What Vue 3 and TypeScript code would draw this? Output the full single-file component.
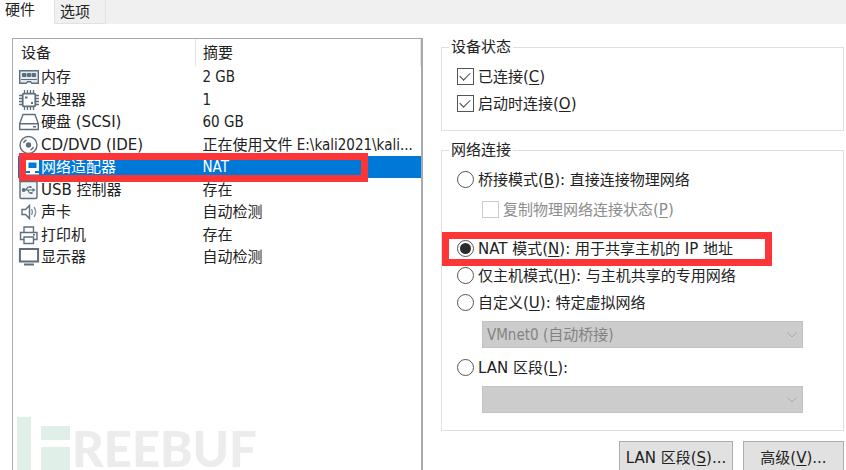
<script setup lang="ts">
import { ref } from 'vue'

interface Device {
  icon: string
  name: string
  summary: string
}

const devices: Device[] = [
  { icon: 'memory', name: '内存', summary: '2 GB' },
  { icon: 'cpu', name: '处理器', summary: '1' },
  { icon: 'disk', name: '硬盘 (SCSI)', summary: '60 GB' },
  { icon: 'cd', name: 'CD/DVD (IDE)', summary: '正在使用文件 E:\\kali2021\\kali...' },
  { icon: 'network', name: '网络适配器', summary: 'NAT' },
  { icon: 'usb', name: 'USB 控制器', summary: '存在' },
  { icon: 'sound', name: '声卡', summary: '自动检测' },
  { icon: 'printer', name: '打印机', summary: '存在' },
  { icon: 'display', name: '显示器', summary: '自动检测' },
]

const selected = ref('network')
const connected = ref(true)
const connectAtPowerOn = ref(true)
const replicate = ref(false)
const mode = ref('nat')
</script>

<template>
  <main class="dialog">
    <nav class="tabs" role="tablist">
      <button class="tab active" type="button" role="tab" aria-selected="true">硬件</button>
      <button class="tab" type="button" role="tab" aria-selected="false">选项</button>
    </nav>

    <div class="content">
      <section class="device-panel">
        <table class="devices">
          <thead>
            <tr>
              <th class="name-col">设备</th>
              <th>摘要</th>
            </tr>
          </thead>
          <tbody>
            <tr
              v-for="d in devices"
              :key="d.icon"
              :class="{ selected: selected === d.icon }"
              @click="selected = d.icon"
            >
              <td>
                <span class="device">
                  <svg class="icon" viewBox="0 0 22 22" aria-hidden="true">
                    <g v-if="d.icon === 'memory'">
                      <path d="M1.700 4.700h18.600v12.600h-6.600l-1.200-1.600H9.500l-1.200 1.600H1.700z" fill="#e4eaee" />
                      <path d="M4.500 7.500h3.500v3H4.500zM9.500 7.500h3v3h-3zM14 7.500h3.500v3H14z" fill="#5d6e7c" stroke-width="1" />
                      <path d="M3 13.500h16" stroke-width="1" />
                    </g>
                    <g v-else-if="d.icon === 'cpu'">
                      <rect x="4.700" y="4.700" width="12.600" height="12.600" rx="1" stroke-width="1.800" />
                      <path d="M6.500 1v3M9.500 1v3M12.500 1v3M15.500 1v3M6.500 18v3M9.500 18v3M12.500 18v3M15.500 18v3M1 6.500h3M1 9.500h3M1 12.500h3M1 15.500h3M18 6.500h3M18 9.500h3M18 12.500h3M18 15.500h3" stroke-width="1.300" />
                      <path d="M7 7.500h2.500v2H7zM13 13h2v2h-2z" fill="#5d6e7c" stroke="none" />
                    </g>
                    <g v-else-if="d.icon === 'disk'">
                      <path d="M5 3.500h12l3.300 9v6H1.700v-6z" fill="#fff" />
                      <path d="M1.700 12.700h18.600M15 15.700h3" />
                    </g>
                    <g v-else-if="d.icon === 'cd'">
                      <circle cx="10.500" cy="11" r="8.500" />
                      <circle cx="10.500" cy="11" r="2" fill="#5d6e7c" />
                      <path d="M5.500 9a6 6 0 0 1 3-3M15.500 13a6 6 0 0 1-3 3" />
                    </g>
                    <g v-else-if="d.icon === 'network'">
                      <path d="M8 3h13v12H8z" fill="#fff" stroke="none" />
                      <path d="M10.500 6.500h8v5.500h-8z" fill="#0078d7" stroke="none" />
                      <path d="M12 15h5v2h4v1.500H8V17h4z" fill="#fff" stroke="none" />
                    </g>
                    <g v-else-if="d.icon === 'usb'">
                      <rect x="2" y="2.500" width="17" height="17" rx="1.500" fill="#f2f5f7" />
                      <path d="M5 11h11M7.500 11l2.500-3h2M9.500 11l2 3h2" stroke-width="1.200" />
                      <circle cx="5.700" cy="11" r="1.200" fill="#5d6e7c" />
                      <path d="M14.500 9l3 2-3 2zM11.500 7h2v2h-2zM12.500 13h2v2h-2z" fill="#5d6e7c" stroke="none" />
                    </g>
                    <g v-else-if="d.icon === 'sound'">
                      <path d="M4 8.500h3.500l4-4v13l-4-4H4z" />
                      <path d="M13.500 8q1.700 3 0 6M16 6q3.300 5 0 10" stroke="#8996a1" />
                    </g>
                    <g v-else-if="d.icon === 'printer'">
                      <path d="M6 8V3h9.500v5M6 15.500H2.500V8.500h16.500v7H15.500" />
                      <path d="M6 13h9.500v6.500H6z" fill="#fff" />
                      <path d="M15 10.700h2" />
                    </g>
                    <g v-else>
                      <rect x="1.900" y="3" width="18.200" height="12.500" stroke-width="2" fill="#fff" />
                      <path d="M6 18.500h10" stroke-width="2" />
                    </g>
                  </svg>
                  {{ d.name }}
                </span>
                <span v-if="d.icon === 'network'" class="marker row-marker"></span>
              </td>
              <td>{{ d.summary }}</td>
            </tr>
          </tbody>
        </table>

        <div class="watermark" aria-hidden="true">
          <svg class="watermark-bars" viewBox="0 0 53 53">
            <path d="M0 0h14v53H0zM24 9h29v14H24zM24 30h29v23H24z" fill="#e0f0e8" />
          </svg>
          <span class="watermark-text">REEBUF</span>
        </div>
      </section>

      <section class="settings">
        <fieldset>
          <legend>设备状态</legend>
          <label class="option">
            <input v-model="connected" type="checkbox" />
            <span>已连接(<u>C</u>)</span>
          </label>
          <label class="option">
            <input v-model="connectAtPowerOn" type="checkbox" />
            <span>启动时连接(<u>O</u>)</span>
          </label>
        </fieldset>

        <fieldset class="network">
          <legend>网络连接</legend>
          <label class="option">
            <input v-model="mode" type="radio" name="mode" value="bridged" />
            <span>桥接模式(<u>B</u>): 直接连接物理网络</span>
          </label>
          <label class="option nested">
            <input v-model="replicate" type="checkbox" disabled />
            <span>复制物理网络连接状态(<u>P</u>)</span>
          </label>
          <label class="option nat">
            <input v-model="mode" type="radio" name="mode" value="nat" />
            <span>NAT 模式(<u>N</u>): 用于共享主机的 IP 地址</span>
            <span class="marker nat-marker"></span>
          </label>
          <label class="option">
            <input v-model="mode" type="radio" name="mode" value="hostonly" />
            <span>仅主机模式(<u>H</u>): 与主机共享的专用网络</span>
          </label>
          <label class="option">
            <input v-model="mode" type="radio" name="mode" value="custom" />
            <span>自定义(<u>U</u>): 特定虚拟网络</span>
          </label>
          <div class="select">
            <select aria-label="特定虚拟网络" disabled>
              <option>VMnet0 (自动桥接)</option>
            </select>
            <svg class="chevron" viewBox="0 0 10 6" aria-hidden="true"><path d="M.5.5L5 5 9.500.5" /></svg>
          </div>
          <label class="option lan">
            <input v-model="mode" type="radio" name="mode" value="lan" />
            <span>LAN 区段(<u>L</u>):</span>
          </label>
          <div class="select">
            <select aria-label="LAN 区段" disabled></select>
            <svg class="chevron" viewBox="0 0 10 6" aria-hidden="true"><path d="M.5.5L5 5 9.500.5" /></svg>
          </div>
        </fieldset>

        <div class="actions">
          <button class="action wide" type="button">LAN 区段(<u>S</u>)...</button>
          <button class="action" type="button">高级(<u>V</u>)...</button>
        </div>
      </section>
    </div>
  </main>
</template>

<style>
body {
  margin: 0;
  background: #fff;
  overflow: hidden;
}
</style>

<style scoped>
.dialog,
.dialog button {
  font-family: "DejaVu Sans", "Noto Sans CJK SC", sans-serif;
  font-size: 15px;
  line-height: 20px;
  color: #222;
}

.devices td:last-child,
.dialog select {
  font-family: "DejaVu Sans Condensed", "Noto Sans CJK SC", sans-serif;
  font-size: 15px;
  line-height: 20px;
}

.dialog {
  display: flex;
  flex-direction: column;
  height: 100vh;
}

u {
  text-decoration-thickness: 1px;
  text-underline-offset: 2px;
}

.tabs {
  display: flex;
  flex: none;
  height: 24px;
  background: #f0f0f0;
}

.tab {
  box-sizing: border-box;
  padding: 0 15px 0 5px;
  border: 1px solid #e2e2e2;
  border-top: 0;
  background: #f0f0f0;
}

.tab.active {
  padding: 0 19px 5px 5px;
  border: 0;
  background: #fff;
}

.content {
  display: grid;
  grid-template-rows: minmax(0, 1fr);
  grid-template-columns: 411fr 403fr;
  gap: 18px;
  flex: 1;
  min-height: 0;
  padding: 13px 2px 0 12px;
}

.device-panel {
  position: relative;
  margin-top: 1px;
  border: solid #a5a9b3;
  border-width: 1px 2px 0 1px;
}

.devices {
  width: 100%;
  border-collapse: collapse;
  table-layout: fixed;
}

.devices th {
  height: 27px;
  padding: 0 7px;
  border-right: 1px solid #e2e2e2;
  font-weight: 400;
  text-align: left;
}

.devices .name-col {
  width: 167px;
  padding-left: 8px;
}

.devices td {
  height: 22px;
  padding: 0 0 0 7px;
  white-space: nowrap;
}

.devices tr:nth-child(even) td {
  height: 23px;
}

.devices td:first-child {
  padding-left: 5px;
  background-clip: content-box;
}

.devices tbody tr {
  position: relative;
}

.devices .selected td {
  background-color: #0078d7;
  color: #fff;
}

.device {
  display: flex;
  align-items: center;
  gap: 1px;
  height: 22px;
}

.icon {
  flex: none;
  width: 22px;
  height: 22px;
  fill: none;
  stroke: #5d6e7c;
  stroke-width: 1.4;
}

.marker {
  position: absolute;
  box-sizing: border-box;
  border: 7px solid #fc3636;
  pointer-events: none;
}

.row-marker {
  top: -3px;
  left: 6px;
  width: 349px;
  height: 29px;
}

.watermark {
  position: absolute;
  left: 4px;
  bottom: 0;
  display: flex;
  align-items: flex-end;
  gap: 2px;
}

.watermark-bars {
  width: 53px;
  height: 53px;
}

.watermark-text {
  font-family: Lato, sans-serif;
  font-size: 49px;
  font-weight: 900;
  line-height: 44px;
  color: #ececec;
}

fieldset {
  min-width: 0;
  margin: 0 0 9px;
  padding: 6px 40px 13px 15px;
  border: 1px solid #dfdfdf;
}

fieldset.network {
  margin-bottom: 10px;
  padding-bottom: 17px;
}

legend {
  height: 20px;
  margin-left: -8px;
  padding: 0 2px;
}

.option {
  position: relative;
  display: flex;
  align-items: center;
  gap: 4px;
  height: 27px;
  white-space: nowrap;
}

.nested {
  margin: 3px 0 0 25px;
  color: #8c8c8c;
}

.nat {
  margin-top: 12px;
}

.lan {
  margin-top: 6px;
}

.nat-marker {
  top: -3px;
  left: -15px;
  width: 330px;
  height: 34px;
}

input {
  position: relative;
  flex: none;
  box-sizing: border-box;
  width: 17px;
  height: 17px;
  margin: 0;
  border: 1px solid #555;
  background: #fff;
  appearance: none;
}

input[type="radio"] {
  border-radius: 50%;
}

input:disabled {
  border-color: #ccc;
}

input[type="checkbox"]:checked::after {
  content: "";
  position: absolute;
  top: 3px;
  left: 2px;
  width: 9px;
  height: 5px;
  border: solid #444;
  border-width: 0 0 1px 1px;
  transform: rotate(-45deg);
}

input[type="radio"]:checked::after {
  content: "";
  position: absolute;
  inset: 2px;
  border-radius: 50%;
  background: #2b2b2b;
}

.select {
  position: relative;
  height: 27px;
  margin: 5px 0 0 25px;
}

.dialog select {
  box-sizing: border-box;
  width: 100%;
  height: 27px;
  padding: 0 4px;
  border: 1px solid #c2c2c2;
  border-radius: 0;
  background: #ccc;
  color: #838383;
  opacity: 1;
  appearance: none;
}

.chevron {
  position: absolute;
  top: 11px;
  right: 6px;
  width: 10px;
  height: 6px;
  fill: none;
  stroke: #a8a8a8;
}

.actions {
  display: flex;
  justify-content: flex-end;
  gap: 10px;
}

.action {
  width: 101px;
  height: 33px;
  padding: 0;
  border: 1px solid #adadad;
  background: #e1e1e1;
  white-space: nowrap;
}

.action.wide {
  width: 114px;
}
</style>
